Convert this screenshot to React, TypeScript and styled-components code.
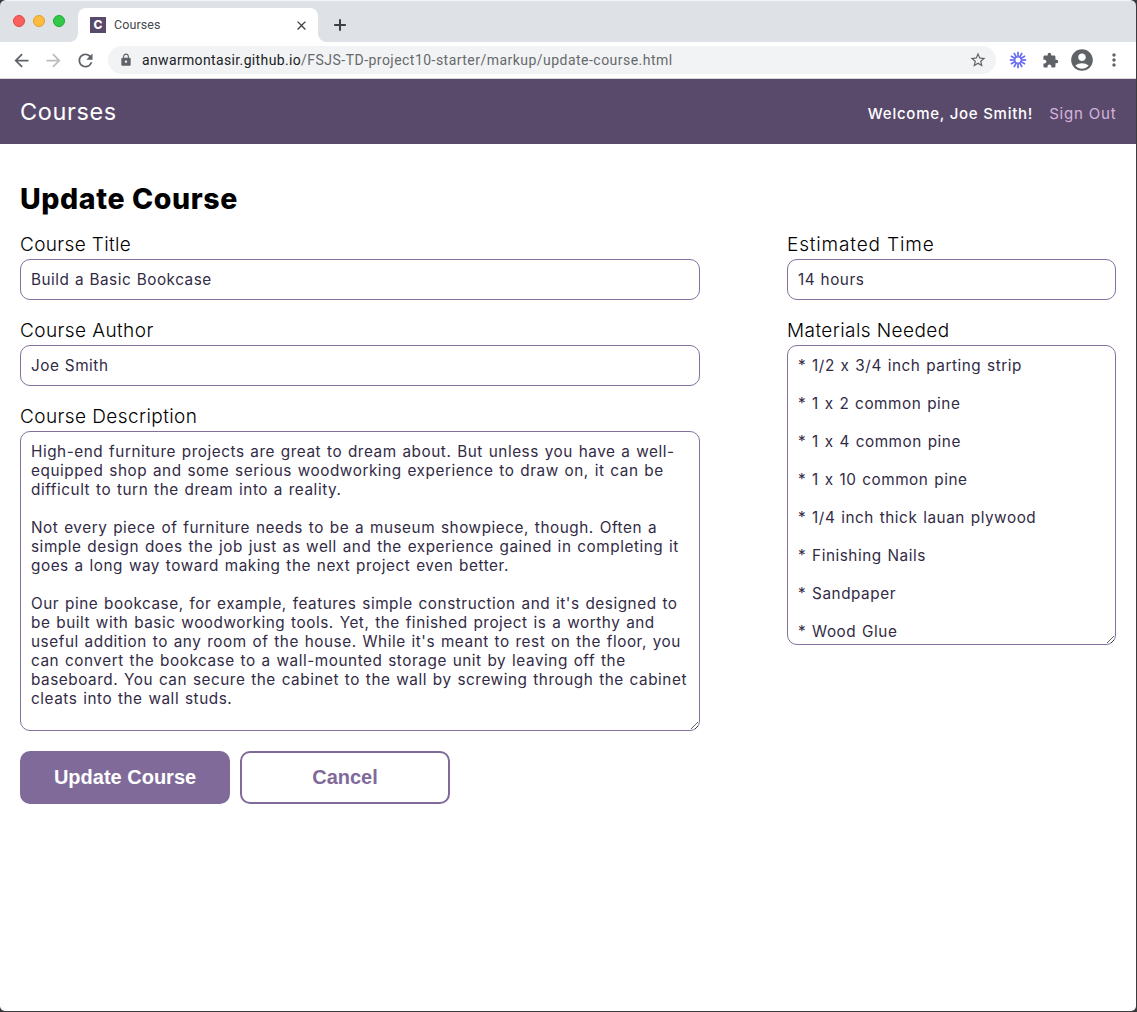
import React from "react";
import styled, { createGlobalStyle } from "styled-components";
import { Plus } from "lucide-react";
import {
  MdAccountCircle,
  MdArrowBack,
  MdArrowForward,
  MdClose,
  MdExtension,
  MdLock,
  MdMoreVert,
  MdRefresh,
  MdStarBorder,
} from "react-icons/md";

const GlobalStyle = createGlobalStyle`
  *, *::before, *::after { box-sizing: border-box; }
  html, body { margin: 0; background: #3b3b3d; }
`;

const BrowserWindow = styled.div`
  display: flex;
  flex-direction: column;
  width: 1137px;
  height: 1012px;
  overflow: hidden;
  border-right: 1px solid #3b3b3d;
  border-bottom: 1px solid #3b3b3d;
  background: #3b3b3d;
  font-family: Inter, "Liberation Sans", sans-serif;
`;

const TabStrip = styled.div`
  display: flex;
  height: 42px;
  padding-left: 12px;
  border-top: 1px solid #f3f5f6;
  border-radius: 6px 6px 0 0;
  background: #dee1e6;
  flex: none;
`;

const TrafficLights = styled.div`
  display: flex;
  gap: 8px;
  padding: 14px 0 0 1px;
  width: 66px;
`;

const Light = styled.span<{ $fill: string; $edge: string }>`
  width: 12px;
  height: 12px;
  border-radius: 50%;
  background: ${(p) => p.$fill};
  border: 0.5px solid ${(p) => p.$edge};
`;

const Tab = styled.div`
  position: relative;
  display: flex;
  align-items: center;
  align-self: flex-end;
  width: 240px;
  height: 34px;
  padding: 0 9px 0 12px;
  border-radius: 8px 8px 0 0;
  background: #fff;

  &::before,
  &::after {
    content: "";
    position: absolute;
    bottom: 0;
    width: 8px;
    height: 8px;
  }
  &::before {
    left: -8px;
    background: radial-gradient(circle at 0 0, transparent 7.5px, #fff 8px);
  }
  &::after {
    right: -8px;
    background: radial-gradient(circle at 100% 0, transparent 7.5px, #fff 8px);
  }
`;

const Favicon = styled.span`
  width: 16px;
  height: 16px;
  margin-right: 8px;
  background: #594a6c;
  color: #fff;
  font: 800 12px/16px Inter, sans-serif;
  text-align: center;
`;

const TabTitle = styled.span`
  flex: 1;
  color: #45484c;
  font: 400 12.5px/16px Roboto, sans-serif;
  letter-spacing: 0.08px;
`;

const NewTab = styled.div`
  display: flex;
  align-items: center;
  padding: 7px 0 0 12px;
  color: #3c4043;
`;

const Toolbar = styled.div`
  display: flex;
  align-items: center;
  height: 37px;
  padding: 0 12px 0 11px;
  border-bottom: 1px solid #d5d6d9;
  background: #fff;
  color: #5f6368;
  flex: none;
`;

const NavButtons = styled.div`
  display: flex;
  gap: 11px;
  width: 97px;

  svg:nth-child(2) {
    color: #babcbe;
  }
`;

const AddressBar = styled.div`
  display: flex;
  align-items: center;
  width: 888px;
  height: 28px;
  padding: 0 9px 0 11px;
  border-radius: 14px;
  background: #f1f3f4;
`;

const Url = styled.span`
  flex: 1;
  margin-left: 9px;
  color: #67696d;
  font: 400 14px/20px Roboto, sans-serif;
  letter-spacing: 0.47px;
  white-space: nowrap;
`;

const Host = styled.span`
  color: #202124;
  letter-spacing: 0.36px;
`;

const ToolbarActions = styled.div`
  display: flex;
  align-items: center;
  flex: 1;
  margin-left: 13px;
`;

const Extension = styled.span`
  display: flex;
  margin: 0 10px 0 15px;
`;

const Menu = styled.span`
  display: flex;
  margin-left: 9.5px;
`;

const Page = styled.div`
  flex: 1;
  overflow: hidden;
  border-radius: 0 0 5px 5px;
  background: #fff;
`;

const Header = styled.header`
  display: flex;
  align-items: center;
  justify-content: space-between;
  height: 65px;
  padding: 0 19.5px 0 20px;
  background: #594a6c;
`;

const Logo = styled.a`
  color: #fff;
  font-size: 23.5px;
  font-weight: 430;
  letter-spacing: 0.62px;
`;

const UserNav = styled.nav`
  display: flex;
  gap: 16px;
  padding-top: 4px;
  font-size: 15px;
  line-height: 20px;
`;

const Welcome = styled.span`
  color: #fff;
  font-weight: 500;
  letter-spacing: 0.75px;
`;

const SignOut = styled.a`
  color: #d7b3dc;
  letter-spacing: 0.82px;
`;

const Main = styled.main`
  padding: 35px 20px 0;
`;

const Title = styled.h2`
  margin: 0 0 15px;
  color: #000;
  font-size: 28.5px;
  font-weight: 800;
  line-height: 40px;
  letter-spacing: 0.6px;
`;

const Columns = styled.div`
  display: grid;
  grid-template-columns: 680px 329px;
  column-gap: 87px;
`;

const Column = styled.div`
  display: flex;
  flex-direction: column;
  gap: 20px;
`;

const Field = styled.label`
  display: flex;
  flex-direction: column;
`;

const FieldName = styled.span<{ $tracking?: number }>`
  padding: 1px 0 4px;
  color: #000;
  font-size: 19px;
  font-weight: 300;
  line-height: 20px;
  letter-spacing: ${(p) => p.$tracking ?? 0.42}px;
`;

const Input = styled.input`
  height: 41px;
  padding: 10px;
  border: 1px solid #84709b;
  border-radius: 10px;
  outline: none;
  background: #fff;
  color: #322b45;
  font: 400 15.3px/19px Inter, sans-serif;
  letter-spacing: 0.53px;
  word-spacing: 0.6px;
`;

const TextArea = styled.textarea`
  height: 300px;
  padding: 10px;
  border: 1px solid #84709b;
  border-radius: 10px;
  outline: none;
  overflow: hidden;
  resize: both;
  background: #fff;
  color: #322b45;
  font: 400 15.3px/19px Inter, sans-serif;
  letter-spacing: 0.55px;
  word-spacing: 0.98px;
  white-space: pre;
`;

const Actions = styled.div`
  display: flex;
  gap: 10px;
  padding-top: 20px;
`;

const Button = styled.button<{ $primary?: boolean }>`
  width: 210px;
  height: 53px;
  padding: 0 0 2px;
  border: 2px solid #7f6a9a;
  border-radius: 10px;
  background: ${(p) => (p.$primary ? "#7f6a9a" : "#fff")};
  color: ${(p) => (p.$primary ? "#fff" : "#7f6a9a")};
  font: bold 20px/24px "Liberation Sans", Arial, sans-serif;
`;

const DESCRIPTION = `High-end furniture projects are great to dream about. But unless you have a well-
equipped shop and some serious woodworking experience to draw on, it can be
difficult to turn the dream into a reality.

Not every piece of furniture needs to be a museum showpiece, though. Often a
simple design does the job just as well and the experience gained in completing it
goes a long way toward making the next project even better.

Our pine bookcase, for example, features simple construction and it's designed to
be built with basic woodworking tools. Yet, the finished project is a worthy and
useful addition to any room of the house. While it's meant to rest on the floor, you
can convert the bookcase to a wall-mounted storage unit by leaving off the
baseboard. You can secure the cabinet to the wall by screwing through the cabinet
cleats into the wall studs.`;

const MATERIALS = [
  "* 1/2 x 3/4 inch parting strip",
  "* 1 x 2 common pine",
  "* 1 x 4 common pine",
  "* 1 x 10 common pine",
  "* 1/4 inch thick lauan plywood",
  "* Finishing Nails",
  "* Sandpaper",
  "* Wood Glue",
].join("\n\n");

const RAYS = Array.from({ length: 12 }, (_, i) => i * 30);

function Starburst() {
  return (
    <svg width="18" height="18" viewBox="-9 -9 18 18">
      <g stroke="#6a6af0" strokeWidth="1.7">
        {RAYS.map((angle) => (
          <line key={angle} x1="0" y1="-3.2" x2="0" y2="-8.2" transform={`rotate(${angle})`} />
        ))}
        <circle r="3.2" fill="none" strokeWidth="1.3" />
      </g>
    </svg>
  );
}

export default function App() {
  return (
    <>
      <GlobalStyle />
      <BrowserWindow>
        <TabStrip>
          <TrafficLights>
            <Light $fill="#fc605c" $edge="#e2463f" />
            <Light $fill="#fdbc40" $edge="#dfa023" />
            <Light $fill="#34c84a" $edge="#1aaa2f" />
          </TrafficLights>
          <Tab>
            <Favicon>C</Favicon>
            <TabTitle>Courses</TabTitle>
            <MdClose size={15} color="#3c4043" />
          </Tab>
          <NewTab>
            <Plus size={20} strokeWidth={2.4} strokeLinecap="butt" />
          </NewTab>
        </TabStrip>
        <Toolbar>
          <NavButtons>
            <MdArrowBack size={21} />
            <MdArrowForward size={21} />
            <MdRefresh size={21} />
          </NavButtons>
          <AddressBar>
            <MdLock size={14} />
            <Url>
              <Host>anwarmontasir.github.io</Host>
              /FSJS-TD-project10-starter/markup/update-course.html
            </Url>
            <MdStarBorder size={18} />
          </AddressBar>
          <ToolbarActions>
            <Starburst />
            <Extension>
              <MdExtension size={17} />
            </Extension>
            <MdAccountCircle size={26} />
            <Menu>
              <MdMoreVert size={20} />
            </Menu>
          </ToolbarActions>
        </Toolbar>
        <Page>
          <Header>
            <Logo>Courses</Logo>
            <UserNav>
              <Welcome>Welcome, Joe Smith!</Welcome>
              <SignOut>Sign Out</SignOut>
            </UserNav>
          </Header>
          <Main>
            <Title>Update Course</Title>
            <Columns>
              <Column>
                <Field>
                  <FieldName $tracking={0.36}>Course Title</FieldName>
                  <Input defaultValue="Build a Basic Bookcase" />
                </Field>
                <Field>
                  <FieldName>Course Author</FieldName>
                  <Input defaultValue="Joe Smith" />
                </Field>
                <Field>
                  <FieldName>Course Description</FieldName>
                  <TextArea defaultValue={DESCRIPTION} />
                </Field>
              </Column>
              <Column>
                <Field>
                  <FieldName $tracking={0.85}>Estimated Time</FieldName>
                  <Input defaultValue="14 hours" />
                </Field>
                <Field>
                  <FieldName>Materials Needed</FieldName>
                  <TextArea defaultValue={MATERIALS} />
                </Field>
              </Column>
            </Columns>
            <Actions>
              <Button $primary>Update Course</Button>
              <Button>Cancel</Button>
            </Actions>
          </Main>
        </Page>
      </BrowserWindow>
    </>
  );
}
